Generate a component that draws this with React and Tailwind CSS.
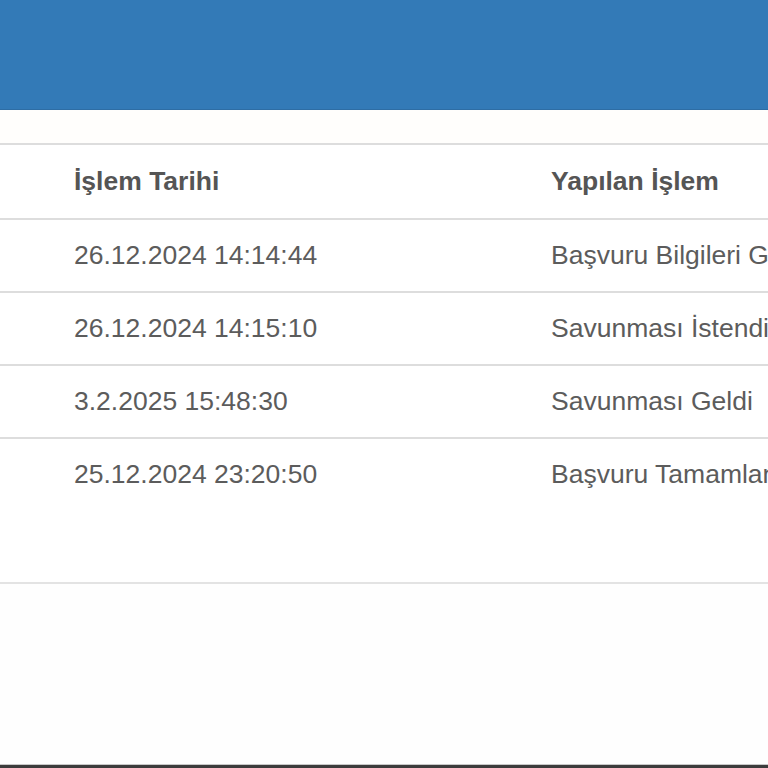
export default function App() {
  const rows = [
    ["26.12.2024 14:14:44", "Başvuru Bilgileri Güncellendi"],
    ["26.12.2024 14:15:10", "Savunması İstendi"],
    ["3.2.2025 15:48:30", "Savunması Geldi"],
    ["25.12.2024 23:20:50", "Başvuru Tamamlandı"],
  ];
  return (
    <div
      className="w-full h-[768px] overflow-hidden bg-white flex flex-col text-[#5c5c5c]"
      style={{ fontFamily: '"Liberation Sans", Arial, sans-serif' }}
    >
      <div className="h-[110px] shrink-0 bg-[#337ab7] border-b border-[#2e6da4]" />
      <div className="h-[33px] shrink-0 bg-[#fffefc]" />
      <div className="shrink-0 border-t-2 border-[#ddd]">
        <div className="grid grid-cols-[74px_477px_1fr] h-[73px] items-center text-[26.5px] font-bold text-[#555] whitespace-nowrap">
          <div />
          <div>İşlem Tarihi</div>
          <div className="overflow-hidden">Yapılan İşlem</div>
        </div>
        {rows.map((r, i) => (
          <div
            key={i}
            className="grid grid-cols-[74px_477px_1fr] h-[73px] items-center border-t-2 border-[#ddd] text-[26.5px] whitespace-nowrap"
          >
            <div />
            <div>{r[0]}</div>
            <div className="overflow-hidden">{r[1]}</div>
          </div>
        ))}
        <div className="h-[72px]" />
      </div>
      <div className="flex-1 border-t-2 border-[#e3e3e3] bg-[#fefefe]" />
      <div className="h-px shrink-0 bg-[#c8c8c8]" />
      <div className="h-[3px] shrink-0 bg-[#3c3c3c]" />
    </div>
  );
}
